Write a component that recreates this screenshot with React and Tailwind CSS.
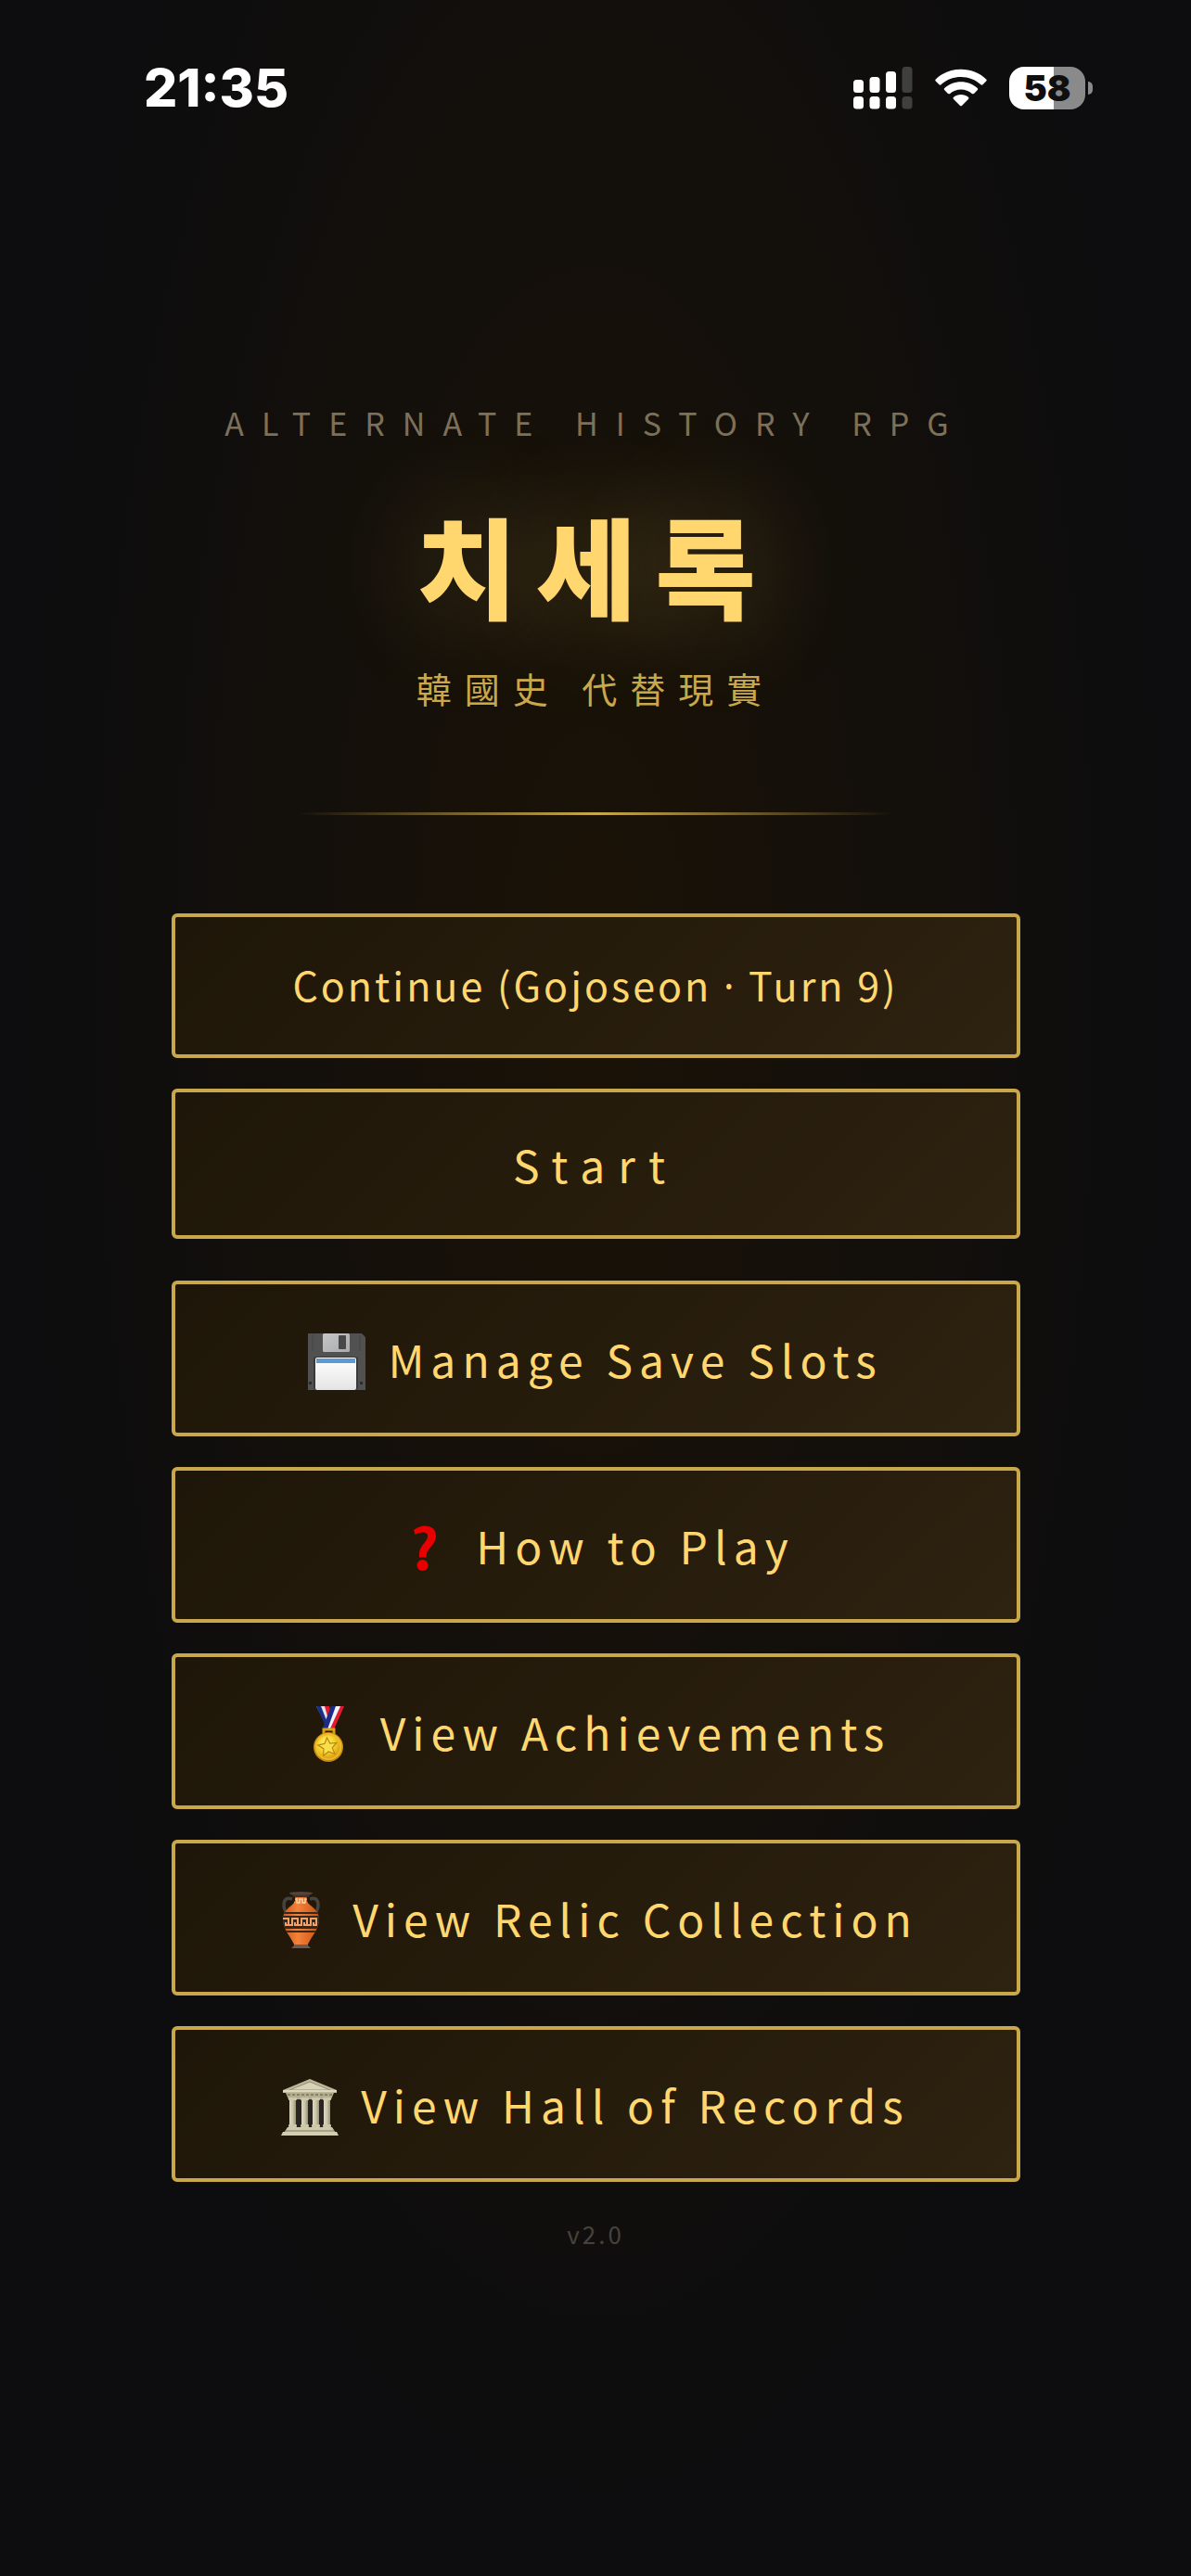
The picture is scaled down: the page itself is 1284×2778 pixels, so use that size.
import { clsx } from 'clsx'

function FloppyIcon() {
  return (
    <svg viewBox="0 0 62 62" className="mt-1.5 size-[62px]" aria-hidden="true">
      <defs>
        <linearGradient id="floppyLabel" x1="0" y1="0" x2="0" y2="1">
          <stop offset="0" stopColor="#ffffff" />
          <stop offset="1" stopColor="#e4e4e4" />
        </linearGradient>
        <linearGradient id="floppyShutter" x1="0" y1="0" x2="1" y2="1">
          <stop offset="0" stopColor="#c4c6c8" />
          <stop offset="1" stopColor="#a9abad" />
        </linearGradient>
      </defs>
      <path d="M0 1h58l4 4v57H0z" fill="#515151" />
      <path d="M5 2v18M56 3v17" stroke="#454545" strokeWidth="1" />
      <rect x="16" y="1" width="29" height="20" rx="1.5" fill="url(#floppyShutter)" />
      <rect x="33" y="3" width="8" height="15" rx="1" fill="#484848" />
      <rect x="6" y="26" width="48" height="36" rx="3" fill="#3a3a3a" />
      <rect x="8" y="27" width="44" height="35" rx="2" fill="url(#floppyLabel)" />
      <rect x="9" y="28" width="42" height="5" fill="#5b9bd5" />
      <path d="M1 53h3v3H1zM56 53h3v3h-3z" fill="#2b2b2b" />
    </svg>
  )
}

function QuestionIcon() {
  return (
    <svg viewBox="0 0 62 62" className="mt-1.5 size-[62px]" aria-hidden="true">
      <path
        d="M19 12C23 9 27 7.500 31 7.500C38 7.500 43 11.500 43 18C43 24 39.500 28 36 32C33.300 35.200 32.600 37.500 32.600 41.500H25C24.500 35.500 25.800 32 28.500 28.500C31.500 24.500 34 22 34 18.500C34 15.500 32 14.500 29 14.500C26 14.500 23.500 15.500 20.500 17Z"
        fill="#e80000"
      />
      <circle cx="28.500" cy="50" r="6" fill="#e80000" />
    </svg>
  )
}

function MedalIcon() {
  return (
    <svg viewBox="0 0 62 62" className="mt-1.5 size-[62px]" aria-hidden="true">
      <defs>
        <radialGradient id="medalFace" cx="0.4" cy="0.35" r="0.7">
          <stop offset="0" stopColor="#fff17a" />
          <stop offset="0.5" stopColor="#f6d62e" />
          <stop offset="1" stopColor="#d99b10" />
        </radialGradient>
      </defs>
      <path d="M17 1h13l5 21-5 4z" fill="#e2e4ee" />
      <path d="M17 1h5l9 23-3 1z" fill="#1b2e83" />
      <path d="M26 1h5l3 12-3 6z" fill="#e31b2e" />
      <path d="M34 1h12L34 27l-8-3z" fill="#f3f4fa" />
      <path d="M33 1h5L29 26l-5-2z" fill="#1b2e83" />
      <path d="M43 1h4L36 26l-4-1z" fill="#e31b2e" />
      <path d="M25 31v-5h11v5" fill="none" stroke="#d9a21a" strokeWidth="3" />
      <circle cx="30" cy="45" r="16" fill="#c98b10" />
      <circle cx="30" cy="44.500" r="14.500" fill="#eebd2d" />
      <circle cx="30" cy="45" r="12.500" fill="url(#medalFace)" />
      <path
        d="M28.500 35l3.300 6 7-.5-4.600 5.400 2.800 6.600-6.700-2.600-5.600 4.300.2-7.300-6-3.900 7-1.600z"
        fill="#f9e04a"
        stroke="#b98512"
        strokeWidth="1.200"
      />
    </svg>
  )
}

function AmphoraIcon() {
  return (
    <svg viewBox="0 0 62 62" className="mt-1.5 size-[62px]" aria-hidden="true">
      <defs>
        <linearGradient id="amphoraBody" x1="0" y1="0" x2="1" y2="0">
          <stop offset="0" stopColor="#c9571a" />
          <stop offset="0.4" stopColor="#f4823a" />
          <stop offset="1" stopColor="#c4500f" />
        </linearGradient>
        <clipPath id="amphoraShape">
          <path d="M24 3h13c-1 6 0 9 4 12 5 4 9 8 9 15 0 11-9 19-13 29H24C20 49 11 41 11 30c0-7 4-11 9-15 4-3 5-6 4-12z" />
        </clipPath>
      </defs>
      <path
        d="M21 8c-9-3-11 5-7 14M40 8c9-3 11 5 7 14"
        fill="none"
        stroke="#45443f"
        strokeWidth="3.500"
      />
      <g clipPath="url(#amphoraShape)">
        <rect x="10" y="2" width="42" height="58" fill="url(#amphoraBody)" />
        <path d="M23 12V8h3v4h3V8h3v4h3V8h3" fill="none" stroke="#ffd3a6" strokeWidth="1.500" />
        <path d="M10 22h42v2H10zM10 26h42v14H10zM10 42h42v2H10z" fill="#35291f" />
        <path
          d="M10 29h7v7h-3v-3M18 36h3v-7h6v7h-3v-3M28 36h3v-7h6v7h-3v-3M38 36h3v-7h6v7h-3v-3"
          fill="none"
          stroke="#f5a266"
          strokeWidth="2"
        />
      </g>
      <path d="M18 1h25l-5 5H23z" fill="#3d3430" />
      <ellipse cx="30.500" cy="1.700" rx="12.500" ry="1.700" fill="#54433a" />
      <path d="M24 57h13l4 4H20z" fill="#6b5a52" />
    </svg>
  )
}

function TempleIcon() {
  return (
    <svg viewBox="0 0 62 62" className="mt-1.5 size-[62px]" aria-hidden="true">
      <defs>
        <linearGradient id="templeColumn" x1="0" y1="0" x2="1" y2="0">
          <stop offset="0" stopColor="#dbd7bf" />
          <stop offset="0.5" stopColor="#cbc6a8" />
          <stop offset="1" stopColor="#979275" />
        </linearGradient>
      </defs>
      <rect x="11" y="21" width="41" height="33" fill="#2a2520" />
      <path d="M31 1L60 13v3H2v-3z" fill="#bdb899" />
      <path d="M31 4L53 13H9z" fill="#d8d3b8" stroke="#948f72" strokeWidth="1" />
      <path d="M2 13h58v2H2z" fill="#dcd8bf" />
      <path d="M5 16h52l-3 7H8z" fill="#b3ae90" />
      <path d="M7 18h48" stroke="#878166" strokeWidth="2" strokeDasharray="3 2" />
      {[9, 22, 34, 46].map((x) => (
        <g key={x}>
          <rect x={x} y="22" width="7" height="30" fill="url(#templeColumn)" />
          <rect x={x - 1} y="21" width="9" height="3" rx="1" fill="#cdc8ab" />
          <rect x={x - 1} y="50" width="9" height="3" rx="1" fill="#cdc8ab" />
        </g>
      ))}
      <path d="M7 53h48l2 3H5z" fill="#cfcaae" />
      <path d="M5 56h52l2 3H3z" fill="#a8a385" />
      <path d="M2 58h58l2 4H0z" fill="#d3ceb3" />
    </svg>
  )
}

const menu = [
  { label: 'Manage Save Slots', Icon: FloppyIcon },
  { label: 'How to Play', Icon: QuestionIcon },
  { label: 'View Achievements', Icon: MedalIcon },
  { label: 'View Relic Collection', Icon: AmphoraIcon },
  { label: 'View Hall of Records', Icon: TempleIcon },
]

function StatusBar() {
  return (
    <header className="flex h-[190px] items-center justify-between pr-[106px] pl-[155px] text-white">
      <time className="font-['Inter',sans-serif] text-[57px] leading-[64px] font-extrabold">21:35</time>
      <div className="flex items-center gap-6">
        <svg viewBox="0 0 64 46" className="h-[46px] w-[64px]" fill="#fff" aria-label="Signal">
          <rect x="0" y="14" width="11" height="14" rx="3.500" />
          <rect x="17.500" y="11" width="11" height="17" rx="3.500" />
          <rect x="35" y="5" width="11" height="23" rx="3.500" />
          <rect x="52.500" y="0" width="11" height="28" rx="3.500" fill="#403f3f" />
          <rect x="0" y="32" width="11" height="13.500" rx="3.500" />
          <rect x="17.500" y="32" width="11" height="13.500" rx="3.500" />
          <rect x="35" y="32" width="11" height="13.500" rx="3.500" />
          <rect x="52.500" y="32" width="11" height="13.500" rx="3.500" fill="#403f3f" />
        </svg>
        <svg viewBox="0 0 56 42" className="h-[42px] w-[56px]" fill="#fff" aria-label="Wi-Fi">
          <path d="M.8 11.400C8 4.600 17.500.8 28 .8s20 3.800 27.200 10.600c.7.700.7 1.600 0 2.200l-3.700 3.700c-.6.600-1.500.6-2.100 0C43.700 12 36.200 9 28 9S12.300 12 6.600 17.300c-.6.600-1.500.6-2.100 0L.8 13.600c-.7-.6-.7-1.500 0-2.200z" />
          <path d="M10.300 21C15 16.800 21.200 14.300 28 14.300s13 2.500 17.700 6.700c.7.600.7 1.500 0 2.200L42 26.900c-.6.600-1.500.6-2.200.1C36.600 24.100 32.500 22.500 28 22.500s-8.600 1.600-11.800 4.500c-.7.500-1.600.5-2.200-.1l-3.700-3.700c-.7-.7-.7-1.600 0-2.200z" />
          <path d="M20.100 30.700c2.200-1.800 4.900-2.800 7.900-2.800s5.700 1 7.900 2.800c.7.600.7 1.500 0 2.200l-6.700 6.900c-.7.700-1.700.7-2.400 0l-6.700-6.900c-.7-.7-.7-1.600 0-2.200z" />
        </svg>
        <div className="flex items-center gap-[3px]">
          <div className="flex h-[46px] w-[82px] items-center justify-center rounded-[16px] bg-[linear-gradient(90deg,#fff_58%,#8a8a8a_58%)] font-['Inter',sans-serif] text-[38px] leading-[46px] font-black text-[#0f0f0f]">
            58
          </div>
          <div className="h-[14px] w-[5px] rounded-r-full bg-[#8a8a8a]" />
        </div>
      </div>
    </header>
  )
}

function MenuButton({ className, children }) {
  return (
    <button
      type="button"
      className={clsx(
        'flex w-full items-center justify-center rounded-md border-4 border-[#c9a84c] bg-linear-135 from-[#1e1608] to-[#2e2210] text-[#ffd76e]',
        className
      )}
    >
      {children}
    </button>
  )
}

export default function App() {
  return (
    <div className="min-h-screen bg-[radial-gradient(ellipse_at_50%_38%,#1a1206_0%,#0d0d0f_68%)] font-['Noto_Sans_CJK_KR','Noto_Sans',sans-serif]">
      <StatusBar />
      <main className="mx-auto flex w-full max-w-[979px] flex-col items-center px-8 pt-[242px] pb-16 text-center">
        <p className="text-[34px] leading-[48px] tracking-[19px] text-[#7d705a]">ALTERNATE HISTORY RPG</p>
        <h1 className="mt-14 text-[118px] leading-[144px] font-black tracking-[20px] text-[#ffd76e] [text-shadow:0_0_120px_rgba(255,215,110,0.3)]">
          치세록
        </h1>
        <p className="mt-[34px] text-[38px] leading-[56px] tracking-[14px] text-[#c9a84c]">韓國史 代替現實</p>
        <div className="my-[106px] h-[3px] w-[642px] max-w-full bg-linear-to-r from-transparent via-[#c9a84c] to-transparent" />

        <div className="flex w-full flex-col gap-[33px]">
          <MenuButton className="h-[156px] text-[43px] tracking-[3px]">
            <span>
              Continue (Gojoseon <span className="font-['Noto_Sans',sans-serif]">·</span> Turn 9)
            </span>
          </MenuButton>
          <MenuButton className="h-[162px] text-[48px] tracking-[14px]">Start</MenuButton>
        </div>

        <nav className="mt-[45px] flex w-full flex-col gap-[33px]">
          {menu.map(({ label, Icon }) => (
            <MenuButton key={label} className="h-[168px] gap-6 text-[48px] tracking-[7px]">
              <Icon />
              {label}
            </MenuButton>
          ))}
        </nav>
        <p className="mt-9 text-[26px] leading-[40px] tracking-[3px] text-[#46423a]">v2.0</p>
      </main>
    </div>
  )
}
